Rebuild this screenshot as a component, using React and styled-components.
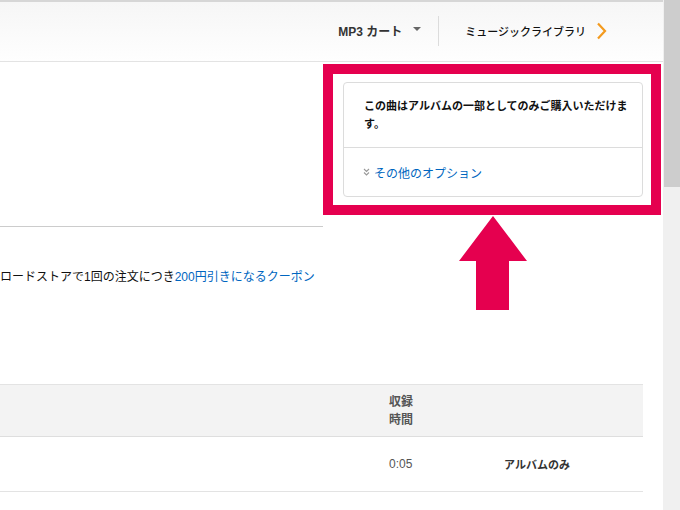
import React from "react";
import styled, { createGlobalStyle } from "styled-components";

const Global = createGlobalStyle`
  html, body { margin: 0; padding: 0; background: #fff; overflow: hidden; }
  body { font-family: "Liberation Sans", "Noto Sans CJK JP", sans-serif; color: #111; }
`;

const Page = styled.div`
  display: flex;
  width: 680px;
  height: 510px;
  overflow: hidden;
`;

const Main = styled.div`
  position: relative;
  width: 663px;
  flex: none;
  display: flex;
  flex-direction: column;
`;

const Scrollbar = styled.div`
  width: 17px;
  flex: none;
  background: #f0f0f0;
  display: flex;
  flex-direction: column;
`;

const Thumb = styled.div`
  margin-left: 1px;
  height: 187px;
  background: #cdcdcd;
`;

const Header = styled.header`
  height: 59px;
  border-top: 2px solid #d6d6d6;
  border-bottom: 1px solid #e3e3e3;
  background: linear-gradient(#f6f6f6, #fefefe);
  display: flex;
  align-items: center;
  justify-content: flex-end;
  padding-right: 56px;
`;

const CartLink = styled.div`
  display: flex;
  align-items: center;
  font-size: 12px;
  font-weight: bold;
  color: #333;
  gap: 10px;
  padding-right: 17px;
  margin-top: -2px;
`;

const Caret = styled.span`
  width: 0;
  height: 0;
  border-left: 4px solid transparent;
  border-right: 4px solid transparent;
  border-top: 4px solid #666;
  margin-left: 1px;
  margin-top: -3px;
`;

const Divider = styled.div`
  width: 1px;
  height: 30px;
  background: #dcdcdc;
  margin-top: -2px;
`;

const LibraryLink = styled.div`
  display: flex;
  align-items: center;
  gap: 10px;
  padding-left: 26px;
  font-size: 11px;
  font-weight: 500;
  color: #111;
  margin-top: -2px;
`;

const TopSection = styled.div`
  display: flex;
  align-items: flex-start;
`;

const LeftCol = styled.div`
  width: 323px;
  height: 164px;
  border-bottom: 1px solid #cccccc;
`;

const Highlight = styled.div`
  margin-top: 2px;
  width: 338px;
  height: 151px;
  box-sizing: border-box;
  border: 10px solid #e5004f;
  background: #fff;
  padding: 8px 8px 8px 10px;
`;

const Card = styled.div`
  width: 300px;
  height: 115px;
  box-sizing: border-box;
  border: 1px solid #dcdcdc;
  border-radius: 4px;
  display: flex;
  flex-direction: column;
`;

const CardMessage = styled.div`
  padding: 13px 14px 15px 20px;
  font-family: "Noto Sans CJK JP", sans-serif;
  font-size: 11px;
  line-height: 18px;
  font-weight: bold;
  color: #111;
  border-bottom: 1px solid #dcdcdc;
`;

const CardOption = styled.div`
  flex: 1;
  display: flex;
  align-items: center;
  padding-left: 19px;
  gap: 4px;
  font-family: "Noto Sans CJK JP", sans-serif;
  font-size: 12px;
  color: #0066c0;
`;

const CouponLine = styled.p`
  margin: 41px 0 0 0;
  font-size: 12px;
  line-height: 18px;
  color: #111;
  white-space: nowrap;
`;

const Link = styled.span`
  color: #0066c0;
`;

const Table = styled.div`
  margin-top: 98px;
  width: 643px;
  display: grid;
  grid-template-columns: 389px 115px 1fr;
`;

const HeadCell = styled.div`
  height: 51px;
  background: #f3f3f3;
  border-top: 1px solid #e3e3e3;
  border-bottom: 1px solid #dedede;
  display: flex;
  align-items: center;
  font-size: 12px;
  line-height: 18px;
  font-weight: bold;
  color: #555;
`;

const Cell = styled.div`
  height: 54px;
  border-bottom: 1px solid #e3e3e3;
  display: flex;
  align-items: center;
  font-size: ${(p) => (p.$strong ? "11px" : "12px")};
  font-weight: ${(p) => (p.$strong ? "bold" : "normal")};
  color: ${(p) => (p.$strong ? "#333" : "#555")};
`;

const Arrow = styled.svg`
  position: absolute;
  left: 459px;
  top: 216px;
`;

function ChevronRight() {
  return (
    <svg width="11" height="18" viewBox="0 0 11 18">
      <path d="M2 1.5 L9 9 L2 16.5" fill="none" stroke="#f39a1e" strokeWidth="2.2" />
    </svg>
  );
}

function DoubleDown() {
  return (
    <svg width="7" height="8" viewBox="0 0 7 8">
      <path d="M1 1 L3.5 3.5 L6 1 M1 4.5 L3.5 7 L6 4.5" fill="none" stroke="#999" strokeWidth="1.1" />
    </svg>
  );
}

export default function App() {
  return (
    <>
      <Global />
      <Page>
        <Main>
          <Header>
            <CartLink>
              MP3 カート
              <Caret />
            </CartLink>
            <Divider />
            <LibraryLink>
              ミュージックライブラリ
              <ChevronRight />
            </LibraryLink>
          </Header>
          <TopSection>
            <LeftCol />
            <Highlight>
              <Card>
                <CardMessage>この曲はアルバムの一部としてのみご購入いただけます。</CardMessage>
                <CardOption>
                  <DoubleDown />
                  その他のオプション
                </CardOption>
              </Card>
            </Highlight>
          </TopSection>
          <CouponLine>
            ロードストアで1回の注文につき<Link>200円引きになるクーポン</Link>
          </CouponLine>
          <Table>
            <HeadCell />
            <HeadCell>
              収録
              <br />
              時間
            </HeadCell>
            <HeadCell />
            <Cell />
            <Cell>0:05</Cell>
            <Cell $strong>アルバムのみ</Cell>
          </Table>
          <Arrow width="68" height="94" viewBox="0 0 68 94">
            <polygon points="34,0 68,45 50,45 50,94 17,94 17,45 0,45" fill="#e5004f" />
          </Arrow>
        </Main>
        <Scrollbar>
          <Thumb />
        </Scrollbar>
      </Page>
    </>
  );
}
